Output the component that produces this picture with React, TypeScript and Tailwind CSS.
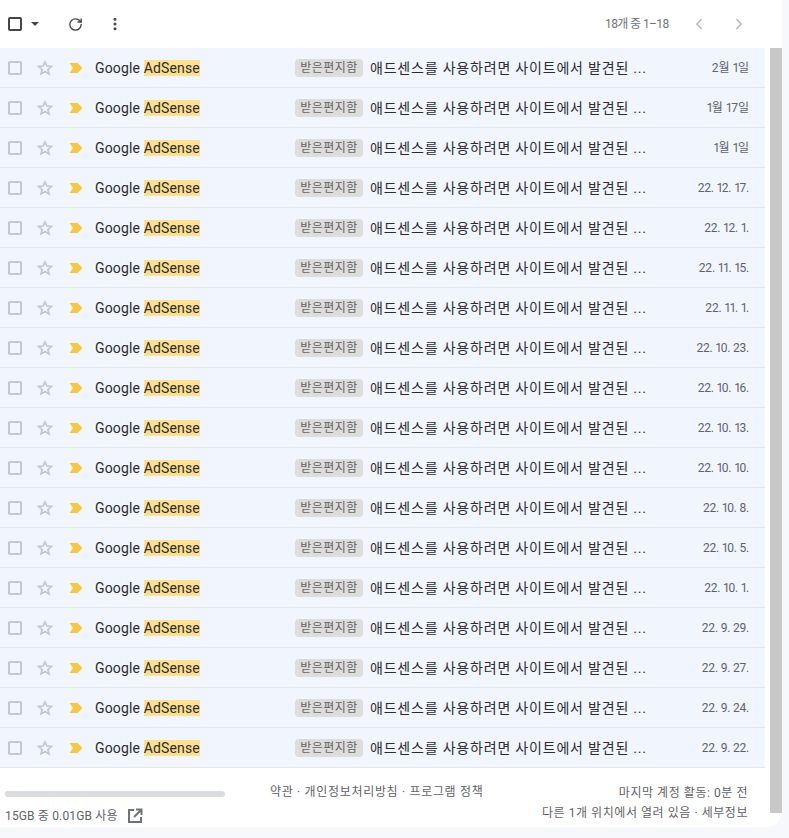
import { ChevronLeft, ChevronRight, EllipsisVertical, RotateCw } from 'lucide-react';

const dates = [
  '2월 1일',
  '1월 17일',
  '1월 1일',
  '22. 12. 17.',
  '22. 12. 1.',
  '22. 11. 15.',
  '22. 11. 1.',
  '22. 10. 23.',
  '22. 10. 16.',
  '22. 10. 13.',
  '22. 10. 10.',
  '22. 10. 8.',
  '22. 10. 5.',
  '22. 10. 1.',
  '22. 9. 29.',
  '22. 9. 27.',
  '22. 9. 24.',
  '22. 9. 22.',
];

function StarIcon() {
  return (
    <svg width="20" height="20" viewBox="0 0 24 24" fill="none" stroke="#c4c7cc" strokeWidth="2" strokeLinejoin="miter">
      <path d="M12 4.6l2.2 5.1 5.5.5-4.2 3.6 1.3 5.4L12 16.3l-4.8 2.9 1.3-5.4-4.2-3.6 5.5-.5z" />
    </svg>
  );
}

function ImportantIcon() {
  return (
    <svg width="14" height="12" viewBox="0 0 14 12">
      <path d="M0.5 1H8.6L13.5 6L8.6 11H0.5L4 6Z" fill="#f6c945" />
    </svg>
  );
}

// the 1s sit tighter than the other digits in the reference
function DateText({ date }: { date: string }) {
  const parts = date.split('1');
  return (
    <>
      {parts.map((part, i) => (
        <span key={i}>
          {part}
          {i < parts.length - 1 && <span className="tracking-[-1.4px]">1</span>}
        </span>
      ))}
    </>
  );
}

function MailRow({ date }: { date: string }) {
  const numeric = !date.includes('월');
  return (
    <div className="flex h-10 items-center border-b border-[#e2e6ee] bg-[#f1f5fd] pr-4">
      <span className="ml-2 h-[14px] w-[14px] shrink-0 rounded-[2px] border-2 border-[#c6c8cc]" />
      <span className="ml-[13px] flex w-5 shrink-0 justify-center">
        <StarIcon />
      </span>
      <span className="ml-[14px] shrink-0">
        <ImportantIcon />
      </span>
      <span className="ml-[12px] w-[200px] shrink-0 text-sm tracking-[0.15px] text-[#2b2c2f]">
        Google <span className="bg-[#ffe08f]">AdSense</span>
      </span>
      <span className="flex h-[18px] w-[68px] shrink-0 items-center justify-center rounded-[4px] bg-[#dddddd] text-xs tracking-[0.5px] text-[#666666]">
        받은편지함
      </span>
      <span className="ml-[7px] w-[290px] shrink-0 truncate text-sm tracking-[0.8px] text-[#2b2c2f]">
        애드센스를 사용하려면 사이트에서 발견된 ...
      </span>
      <span className={numeric ? 'ml-auto text-xs tracking-[-0.2px] text-[#5f6368]' : 'ml-auto text-xs text-[#5f6368]'}>
        <DateText date={date} />
      </span>
    </div>
  );
}

export default function App() {
  return (
    <div className="h-[838px] w-[789px] overflow-hidden bg-[#f6f8fc] font-['Roboto','Noto_Sans_CJK_KR',sans-serif]">
      <div className="h-[827px] w-[782px] rounded-br-2xl bg-white">
        {/* Toolbar */}
        <div className="flex h-12 items-center text-[#444746]">
          <span className="ml-2 h-[14px] w-[14px] rounded-[2px] border-2 border-[#444746]" />
          <span className="ml-[9px] h-0 w-0 border-x-4 border-t-4 border-x-transparent border-t-[#444746]" />
          <RotateCw className="ml-[29px] h-[15px] w-[15px]" strokeWidth={2.2} />
          <EllipsisVertical className="ml-[24px] h-[16px] w-[16px]" strokeWidth={2.6} />
          <span className="ml-[482px] text-xs tracking-[-0.6px] text-[#70757a]">18개 중 1–18</span>
          <ChevronLeft className="ml-[21px] h-[18px] w-[18px] text-[#b5b7ba]" />
          <ChevronRight className="ml-[22px] h-[18px] w-[18px] text-[#b5b7ba]" />
        </div>

        <div className="flex h-[765px]">
          <div className="w-[765px] shrink-0">
            {dates.map((date, i) => (
              <MailRow key={i} date={date} />
            ))}

            {/* Footer */}
            <div className="flex pt-4 text-xs text-[#5f6368]">
              <div className="ml-[5px] w-[265px] shrink-0">
                <div className="mt-[7px] h-[6px] w-[220px] rounded-full bg-[#dadce0]" />
                <div className="mt-[11px] flex items-center tracking-[0.15px]">
                  <span>15GB 중 0.01GB 사용</span>
                  <svg className="ml-[9px]" width="16" height="16" viewBox="0 0 16 16" fill="none" stroke="#6f7276" strokeWidth="2">
                    <path d="M7 2H2v12h12V9M9 1.5h5.5V7M14 2L7 9" />
                  </svg>
                </div>
              </div>
              <div className="leading-4 tracking-[0.68px]">약관 · 개인정보처리방침 · 프로그램 정책</div>
              <div className="-mt-px ml-auto pr-[17px] text-right leading-5 tracking-[0.55px]">
                <div>마지막 계정 활동: 0분 전</div>
                <div>다른 1개 위치에서 열려 있음 · 세부정보</div>
              </div>
            </div>
          </div>
          <div className="ml-[5px] w-3 bg-[#c8c8c8]" />
        </div>
      </div>
    </div>
  );
}
